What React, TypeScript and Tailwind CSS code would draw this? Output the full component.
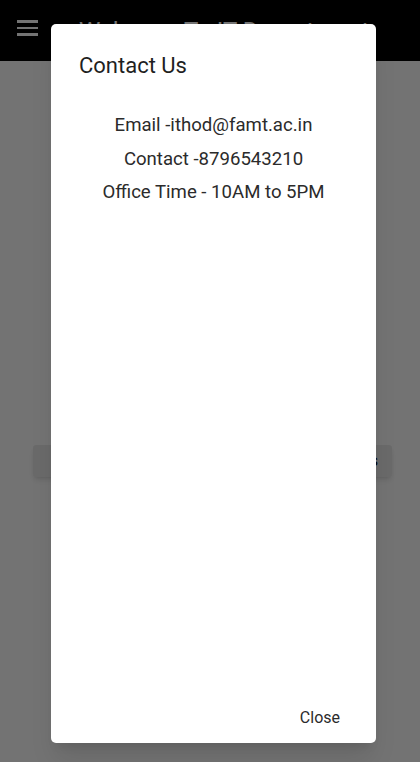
const App = () => {
  return (
    <div className="relative h-[762px] w-[420px] overflow-hidden bg-white" style={{ fontFamily: "Roboto, 'Noto Sans', sans-serif" }}>
      {/* page under the dialog */}
      <header className="flex h-[61px] items-center bg-black">
        <div className="ml-[17px] flex w-[21px] flex-col gap-[4px] pb-[5px]">
          <span className="h-[2.5px] bg-white" />
          <span className="h-[2.5px] bg-white" />
          <span className="h-[2.5px] bg-white" />
        </div>
        <h1 className="ml-[41px] pt-[0px] text-[24px] leading-none text-white">Welcome To IT Department</h1>
      </header>
      <div className="pl-[33px] pr-[28px] pt-[384px]">
        <div className="flex h-[32px] items-center justify-end rounded-[3px] bg-[#ececec] pr-[14px] shadow-md">
          <span className="text-[16px] text-black">Details</span>
        </div>
      </div>

      {/* scrim */}
      <div className="absolute inset-0 bg-black/55" />

      {/* dialog */}
      <div className="absolute left-[51px] top-[24px] flex h-[719px] w-[325px] flex-col rounded-[5px] bg-white shadow-xl">
        <h2 className="pl-[28px] pt-[28px] text-[22px] leading-[28px] text-[#1f1f1f]">Contact Us</h2>
        <div className="mt-[29px] flex flex-col items-center text-[18.6px] leading-[33.5px] text-[#2b2b2b]">
          <p>Email -ithod@famt.ac.in</p>
          <p>Contact -8796543210</p>
          <p>Office Time - 10AM to 5PM</p>
        </div>
        <div className="mt-auto flex justify-end pb-[15px] pr-[36px]">
          <button className="text-[16px] leading-[20px] text-[#2b2b2b]">Close</button>
        </div>
      </div>
    </div>
  )
}

export default App
